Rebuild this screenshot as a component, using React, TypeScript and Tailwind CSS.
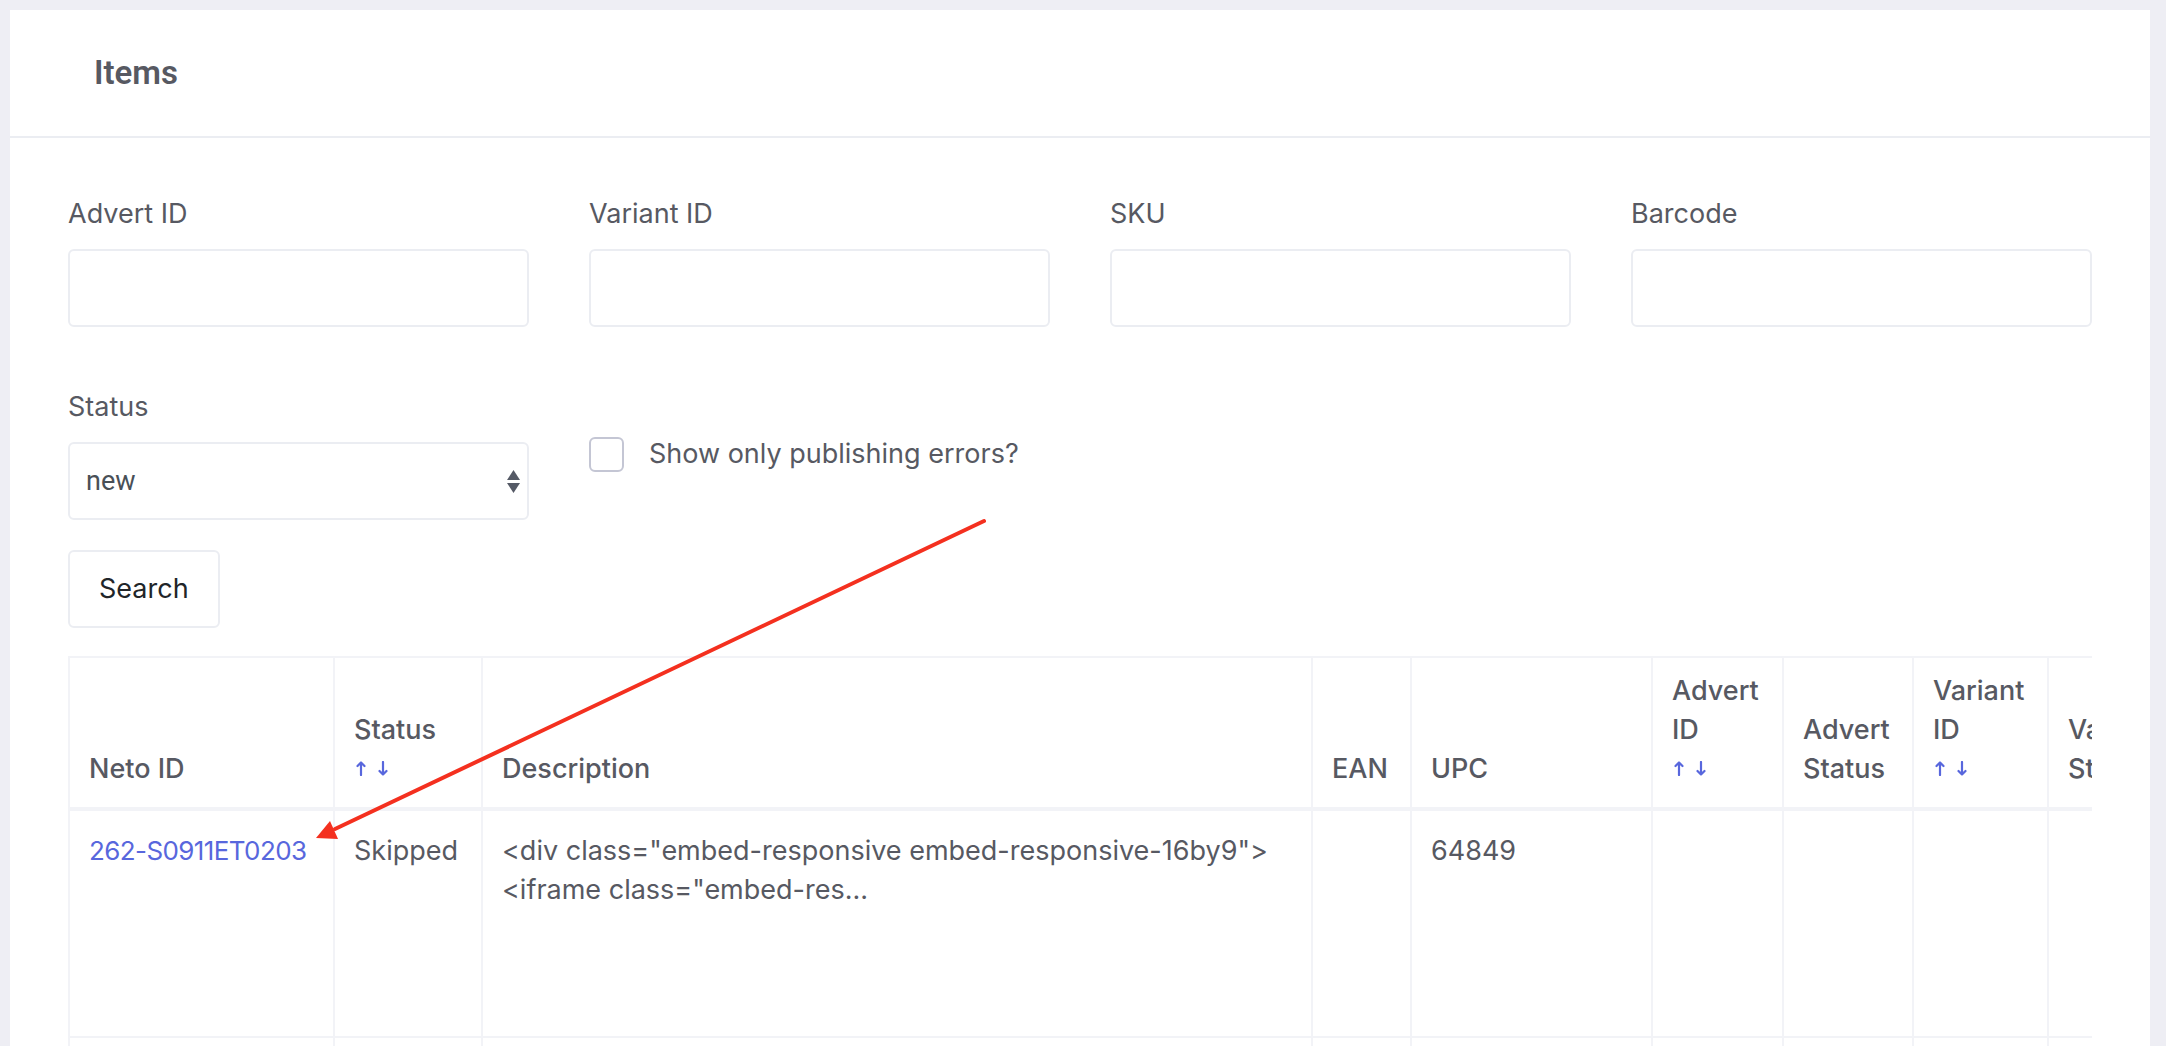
const fields = ["Advert ID", "Variant ID", "SKU", "Barcode"];

const columns: { label: string; width: string; sortable?: boolean }[] = [
  { label: "Neto ID", width: "w-[265px]" },
  { label: "Status", width: "w-[148px]", sortable: true },
  { label: "Description", width: "w-[830px]" },
  { label: "EAN", width: "w-[99px]" },
  { label: "UPC", width: "w-[241px]" },
  { label: "Advert ID", width: "w-[131px]", sortable: true },
  { label: "Advert Status", width: "w-[130px]" },
  { label: "Variant ID", width: "w-[135px]", sortable: true },
  { label: "Variant Status", width: "w-[150px]" },
  { label: "Created", width: "w-[200px]" },
];

const rows = [
  {
    netoId: "262-S0911ET0203",
    status: "Skipped",
    description: '<div class="embed-responsive embed-responsive-16by9"> <iframe class="embed-res...',
    upc: "64849",
  },
  {
    netoId: "262-S0911ET0204",
    status: "Skipped",
    description: '<div class="embed-responsive embed-responsive-16by9"> <iframe class="embed-res...',
    upc: "64850",
  },
];

const cell = "border-2 border-[#f2f3f7] px-[19px] pt-[20px] align-top";

function SortArrows() {
  return (
    <span className="flex h-[39px] items-center gap-[12px] pl-[2px]">
      <svg width="10" height="15" viewBox="0 0 10 15" fill="none" stroke="#5867dd" strokeWidth="2.2" strokeLinecap="round" strokeLinejoin="round">
        <path d="M5 14V1.5M1.5 5L5 1.5L8.5 5" />
      </svg>
      <svg width="10" height="15" viewBox="0 0 10 15" fill="none" stroke="#5867dd" strokeWidth="2.2" strokeLinecap="round" strokeLinejoin="round">
        <path d="M5 1V13.5M1.5 10L5 13.5L8.5 10" />
      </svg>
    </span>
  );
}

function Field({ label }: { label: string }) {
  return (
    <div>
      <label className="mb-[15px] block text-[27px] leading-[40px]">{label}</label>
      <input
        type="text"
        aria-label={label}
        className="block h-[78px] w-full rounded-[6px] border-2 border-[#ebedf2] bg-white px-[18px] text-[27px] outline-none"
      />
    </div>
  );
}

export default function App() {
  return (
    <div className="relative h-[1046px] overflow-hidden bg-[#eeeef4] pl-[10px] pr-[16px] pt-[10px] font-[family-name:Inter,'Liberation_Sans',sans-serif] text-[#575962]">
      <div className="bg-white">
        <div className="flex h-[128px] items-center border-b-2 border-[#ebedf2] pl-[84px]">
          <h3 className="font-[family-name:Roboto,'Liberation_Sans',sans-serif] text-[33px] font-semibold text-[#575962]">
            Items
          </h3>
        </div>

        <div className="px-[58px] pt-[56px]">
          <div className="grid grid-cols-4 gap-x-[60px] gap-y-[60px]">
            {fields.map((f) => (
              <Field key={f} label={f} />
            ))}

            <div>
              <label className="mb-[15px] block text-[27px] leading-[40px]">Status</label>
              <div className="relative">
                <select
                  aria-label="Status"
                  defaultValue="new"
                  className="block h-[78px] w-full appearance-none rounded-[6px] border-2 border-[#ebedf2] bg-white pl-[16px] font-[family-name:Roboto,'Liberation_Sans',sans-serif] text-[27px] text-[#495057] outline-none"
                >
                  <option value="new">new</option>
                  <option value="skipped">skipped</option>
                  <option value="published">published</option>
                </select>
                <svg
                  className="pointer-events-none absolute right-[9px] top-[28px]"
                  width="13"
                  height="23"
                  viewBox="0 0 13 23"
                >
                  <path d="M6.5 0 L13 10 L0 10 Z" fill="#555a66" />
                  <path d="M0 13 L13 13 L6.5 23 Z" fill="#555a66" />
                </svg>
              </div>
            </div>

            <div className="pt-[47px]">
              <label className="flex items-center gap-[25px] text-[27px] leading-[40px]">
                <span className="block h-[35px] w-[35px] rounded-[6px] border-2 border-[#c4c6d4] bg-white" />
                Show only publishing errors?
              </label>
            </div>
          </div>

          <button
            type="button"
            className="mt-[30px] h-[78px] rounded-[6px] border-2 border-[#ebedf2] bg-white px-[29px] text-[27px] text-[#212529]"
          >
            Search
          </button>

          <div className="mt-[28px] overflow-hidden">
            <table className="w-[2329px] table-fixed border-collapse text-left text-[27px] leading-[39px]">
              <thead>
                <tr className="h-[152px]">
                  {columns.map((c) => (
                    <th
                      key={c.label}
                      className={`${c.width} border-x-2 border-t-2 border-b-4 border-[#f2f3f7] px-[19px] pb-[19px] align-bottom font-medium`}
                    >
                      {c.label}
                      {c.sortable ? <SortArrows /> : null}
                    </th>
                  ))}
                </tr>
              </thead>
              <tbody>
                {rows.map((r) => (
                  <tr key={r.netoId} className="h-[228px]">
                    <td className={cell}>
                      <a href="#" className="whitespace-nowrap text-[26px] tracking-[-0.6px] text-[#5867dd]">
                        {r.netoId}
                      </a>
                    </td>
                    <td className={cell}>{r.status}</td>
                    <td className={cell}>{r.description}</td>
                    <td className={cell}></td>
                    <td className={cell}>{r.upc}</td>
                    <td className={cell}></td>
                    <td className={cell}></td>
                    <td className={cell}></td>
                    <td className={cell}></td>
                    <td className={cell}></td>
                  </tr>
                ))}
              </tbody>
            </table>
          </div>
        </div>
      </div>

      {/* annotation arrow */}
      <svg
        className="pointer-events-none absolute left-0 top-0"
        width="2166"
        height="1046"
        viewBox="0 0 2166 1046"
      >
        <line x1="984" y1="521" x2="335" y2="829" stroke="#f4301f" strokeWidth="4" strokeLinecap="round" />
        <path d="M316 838 L330 821 L338 839 Z" fill="#f4301f" />
      </svg>
    </div>
  );
}
